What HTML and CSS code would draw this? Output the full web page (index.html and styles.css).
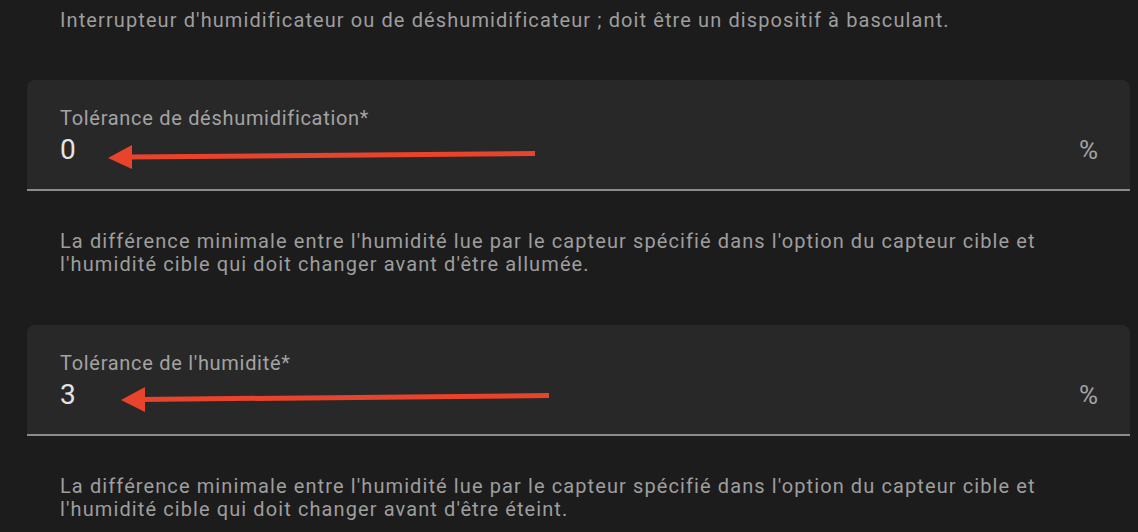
FILE: index.html
```html
<!DOCTYPE html>
<html lang="fr">
<head>
    <meta charset="UTF-8">
    <meta name="viewport" content="width=device-width, initial-scale=1.0">
    <title>Hygrostat</title>
    <link rel="stylesheet" href="styles.css">
</head>
<body>

    <div class="form">
        <p class="helper helper-first">Interrupteur d'humidificateur ou de déshumidificateur ; doit être un dispositif à basculant.</p>

        <!-- Dry tolerance -->
        <div class="field">
            <span class="field-label">Tolérance de déshumidification*</span>
            <div class="field-row">
                <span class="field-value">0</span>
                <span class="field-suffix">%</span>
            </div>
            <svg class="arrow" width="1100" height="111" viewBox="0 0 1100 111">
                <line x1="508" y1="73.5" x2="100" y2="77" stroke="#e8432b" stroke-width="5"/>
                <polygon points="81,78 105,65 105,89" fill="#e8432b"/>
            </svg>
        </div>
        <p class="helper">La différence minimale entre l'humidité lue par le capteur spécifié dans l'option du capteur cible et l'humidité cible qui doit changer avant d'être allumée.</p>

        <!-- Wet tolerance -->
        <div class="field">
            <span class="field-label">Tolérance de l'humidité*</span>
            <div class="field-row">
                <span class="field-value">3</span>
                <span class="field-suffix">%</span>
            </div>
            <svg class="arrow" width="1100" height="111" viewBox="0 0 1100 111">
                <line x1="522" y1="70.5" x2="112" y2="74.5" stroke="#e8432b" stroke-width="5"/>
                <polygon points="94,75 118,62 118,87" fill="#e8432b"/>
            </svg>
        </div>
        <p class="helper">La différence minimale entre l'humidité lue par le capteur spécifié dans l'option du capteur cible et l'humidité cible qui doit changer avant d'être éteint.</p>
    </div>

</body>
</html>
```

FILE: styles.css
```css
body, html {
    margin: 0;
    padding: 0;
    width: 100%;
    height: 100%;
    overflow: hidden;
}

body {
    background-color: #1c1c1c;
    font-family: Roboto, "Noto Sans", sans-serif;
}

.form {
    padding: 9px 8px 0 27px;
}

.helper {
    margin: 39px 0 49px 0;
    padding-left: 33px;
    padding-right: 32px;
    font-size: 20px;
    line-height: 23px;
    letter-spacing: 1.1px;
    color: #9e9e9e;
}

.helper-first {
    margin-top: 0;
    margin-bottom: 48px;
}

.field {
    position: relative;
    height: 109px;
    box-sizing: content-box;
    padding: 0 32px 0 33px;
    background-color: #282828;
    border-radius: 8px 8px 0 0;
    border-bottom: 2px solid #8b8b8b;
    display: flex;
    flex-direction: column;
}

.field-label {
    margin-top: 26px;
    font-size: 20px;
    line-height: 24px;
    letter-spacing: 0.7px;
    color: #a3a3a3;
}

.field-row {
    margin-top: 4px;
    display: flex;
    justify-content: space-between;
    align-items: baseline;
}

.field-value {
    font-size: 28px;
    line-height: 32px;
    color: #e3e3e3;
}

.field-suffix {
    font-size: 26px;
    line-height: 32px;
    color: #a3a3a3;
}

.arrow {
    position: absolute;
    top: 0;
    left: 0;
}
```
